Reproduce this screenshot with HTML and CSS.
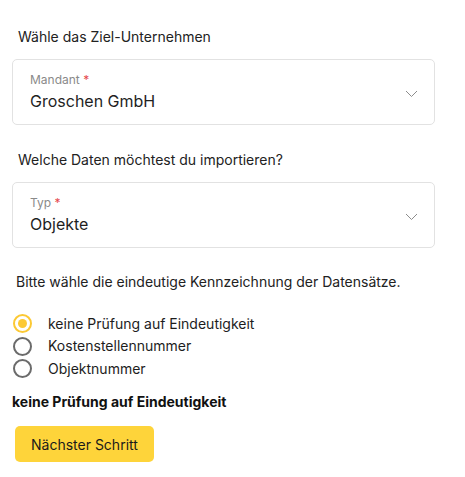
FILE: index.html
```html
<!DOCTYPE html>
<html lang="de">
<head>
<meta charset="utf-8">
<title>Import</title>
<link rel="stylesheet" href="styles.css">
</head>
<body>
<div class="page">
  <p class="heading first">Wähle das Ziel-Unternehmen</p>
  <div class="select">
    <div class="select-content">
      <div class="select-label">Mandant <span class="req">*</span></div>
      <div class="select-value">Groschen GmbH</div>
    </div>
    <svg class="chevron" width="13" height="8" viewBox="0 0 13 8"><path d="M1 1 L6.5 6.5 L12 1" fill="none" stroke="#8c8c8c" stroke-width="1"/></svg>
  </div>

  <p class="heading second">Welche Daten möchtest du importieren?</p>
  <div class="select">
    <div class="select-content">
      <div class="select-label">Typ <span class="req">*</span></div>
      <div class="select-value">Objekte</div>
    </div>
    <svg class="chevron" width="13" height="8" viewBox="0 0 13 8"><path d="M1 1 L6.5 6.5 L12 1" fill="none" stroke="#8c8c8c" stroke-width="1"/></svg>
  </div>

  <p class="heading third">Bitte wähle die eindeutige Kennzeichnung der Datensätze.</p>
  <div class="radios">
    <div class="radio-row"><span class="radio checked"></span><span class="radio-label">keine Prüfung auf Eindeutigkeit</span></div>
    <div class="radio-row"><span class="radio"></span><span class="radio-label">Kostenstellennummer</span></div>
    <div class="radio-row"><span class="radio"></span><span class="radio-label">Objektnummer</span></div>
  </div>

  <p class="selected">keine Prüfung auf Eindeutigkeit</p>
  <button class="next">Nächster Schritt</button>
</div>
</body>
</html>
```
FILE: styles.css
```css
html, body {
  margin: 0;
  padding: 0;
  background: #ffffff;
}
body {
  font-family: Inter, "Noto Sans", sans-serif;
  color: #1d1d1d;
}
.page {
  width: 423px;
  padding: 27px 0 0 12px;
}
.heading {
  margin: 0;
  font-size: 14px;
  line-height: 20px;
  padding-left: 6px;
  color: #222;
}
.heading.second { margin-top: 25px; }
.heading.third { margin-top: 24px; padding-left: 4px; }
.select {
  margin-top: 12px;
  border: 1px solid #e2e2e2;
  border-radius: 5px;
  display: flex;
  align-items: center;
  justify-content: space-between;
  padding: 12px 16px 11px 17px;
}
.select-label {
  font-size: 12px;
  line-height: 16px;
  height: 16px;
  color: #8a8a8a;
}
.req {
  color: #e5484d;
  line-height: 1;
}
.select-value {
  margin-top: 1px;
  font-size: 16px;
  line-height: 24px;
  color: #1f1f1f;
}
.chevron {
  display: block;
  margin-top: 2px;
}
.radios {
  margin-top: 20.5px;
}
.radio-row {
  display: flex;
  align-items: center;
  height: 22.5px;
}
.radio {
  box-sizing: border-box;
  width: 19px;
  height: 19px;
  border: 2px solid #6b6b6b;
  border-radius: 50%;
  margin-left: 1px;
  display: flex;
  align-items: center;
  justify-content: center;
}
.radio.checked {
  border-color: #fcc934;
}
.radio.checked::after {
  content: "";
  width: 9px;
  height: 9px;
  border-radius: 50%;
  background: #fcc934;
}
.radio-label {
  margin-left: 16px;
  font-size: 14px;
  line-height: 20px;
  color: #1d1d1d;
}
.selected {
  margin: 12px 0 0 0;
  font-size: 14px;
  line-height: 20px;
  font-weight: 700;
  color: #111;
}
.next {
  margin: 14px 0 0 3px;
  height: 36px;
  padding: 0 16px;
  border: none;
  border-radius: 5px;
  background: #fed43a;
  font-family: Inter, "Noto Sans", sans-serif;
  font-size: 14px;
  color: #1a1a1a;
}
```
